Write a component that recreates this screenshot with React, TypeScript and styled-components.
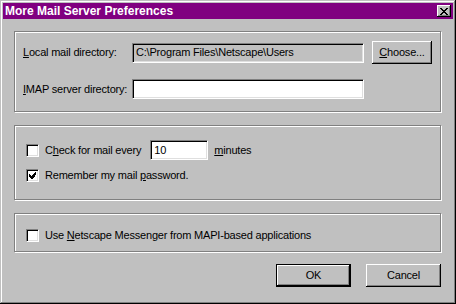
import React from "react";
import styled, { createGlobalStyle } from "styled-components";

const Global = createGlobalStyle`
  html, body { margin: 0; padding: 0; background: #c0c0c0; }
  body { font-family: "Liberation Sans", Arial, sans-serif; font-size: 11px; color: #000; }
  * { box-sizing: border-box; }
`;

const Window = styled.div`
  width: 456px;
  height: 304px;
  background: #c0c0c0;
  padding: 3px;
  display: flex;
  flex-direction: column;
  letter-spacing: -0.2px;
  box-shadow: inset -1px -1px 0 #000, inset 1px 1px 0 #c0c0c0,
    inset -2px -2px 0 #808080, inset 2px 2px 0 #fff;
`;

const TitleBar = styled.div`
  height: 16px;
  background: #800080;
  display: flex;
  align-items: center;
  justify-content: space-between;
  padding: 0 2px 0 2px;
`;

const Title = styled.span`
  color: #fff;
  font-weight: bold;
  font-size: 12px;
  letter-spacing: 0;
  line-height: 14px;
`;

const CloseBox = styled.div`
  width: 14px;
  height: 12px;
  background: #c0c0c0;
  display: flex;
  align-items: center;
  justify-content: center;
  box-shadow: inset -1px -1px 0 #000, inset 1px 1px 0 #fff,
    inset -2px -2px 0 #808080;
`;

const Body = styled.div`
  flex: 1;
  display: flex;
  flex-direction: column;
  padding: 12px 12px 0 11px;
`;

const Group = styled.div<{ $h: number; $pt: number; $gap: number; $mb: number }>`
  height: ${(p) => p.$h}px;
  border: 1px solid #808080;
  box-shadow: 1px 1px 0 #fff, inset 1px 1px 0 #fff;
  padding: ${(p) => p.$pt}px 8px 0 8px;
  margin-bottom: ${(p) => p.$mb}px;
  display: flex;
  flex-direction: column;
  gap: ${(p) => p.$gap}px;
`;

const DirGrid = styled.div`
  display: grid;
  grid-template-columns: 101px 232px 60px;
  column-gap: 8px;
  row-gap: 15px;
  align-items: center;
`;

const Label = styled.span`
  line-height: 13px;
  white-space: nowrap;
`;

const Field = styled.div<{ $disabled?: boolean; $w?: number }>`
  height: 20px;
  width: ${(p) => (p.$w ? `${p.$w}px` : "auto")};
  background: ${(p) => (p.$disabled ? "#c0c0c0" : "#fff")};
  border-top: 1px solid #808080;
  border-left: 1px solid #808080;
  border-bottom: 1px solid #fff;
  border-right: 1px solid #fff;
  box-shadow: inset 1px 1px 0 #000, inset -1px -1px 0 #dfdfdf;
  padding: 0 3px;
  display: flex;
  align-items: center;
  line-height: 13px;
  white-space: nowrap;
  overflow: hidden;
`;

const MinutesField = styled(Field)`
  margin-left: 9px;
  margin-right: 6px;
`;

const Button = styled.div<{ $default?: boolean; $w: number }>`
  width: ${(p) => p.$w}px;
  height: 23px;
  background: #c0c0c0;
  display: flex;
  align-items: center;
  justify-content: center;
  line-height: 13px;
  ${(p) =>
    p.$default
      ? `border: 1px solid #000;
         box-shadow: inset -1px -1px 0 #000, inset 1px 1px 0 #fff, inset -2px -2px 0 #808080;`
      : `box-shadow: inset -1px -1px 0 #000, inset 1px 1px 0 #fff, inset -2px -2px 0 #808080;`}
`;

const Row = styled.div<{ $h: number }>`
  display: flex;
  align-items: center;
  height: ${(p) => p.$h}px;
  padding-left: 3px;
`;

const Box = styled.div`
  width: 13px;
  height: 13px;
  flex: none;
  background: #fff;
  border-top: 1px solid #808080;
  border-left: 1px solid #808080;
  border-bottom: 1px solid #fff;
  border-right: 1px solid #fff;
  box-shadow: inset 1px 1px 0 #000, inset -1px -1px 0 #dfdfdf;
  margin-right: 6px;
  display: flex;
  align-items: center;
  justify-content: center;
`;

const Footer = styled.div`
  display: flex;
  justify-content: flex-end;
  gap: 15px;
`;

const Check = () => (
  <svg width="7" height="7" viewBox="0 0 7 7" shapeRendering="crispEdges">
    <path
      fill="#000"
      d="M6 0h1v3h-1zM5 1h1v4h-1zM4 2h1v4h-1zM3 3h1v4h-1zM2 4h1v3h-1zM1 3h1v3h-1zM0 2h1v3h-1z"
    />
  </svg>
);

const CheckBox = ({ checked }: { checked?: boolean }) => (
  <Box>{checked ? <Check /> : null}</Box>
);

const CloseX = () => (
  <svg width="8" height="7" viewBox="0 0 8 7" shapeRendering="crispEdges">
    <path
      fill="#000"
      d="M0 0h2v1h-2zM6 0h2v1h-2zM1 1h2v1h-2zM5 1h2v1h-2zM2 2h4v1h-4zM3 3h2v1h-2zM2 4h4v1h-4zM1 5h2v1h-2zM5 5h2v1h-2zM0 6h2v1h-2zM6 6h2v1h-2z"
    />
  </svg>
);

export default function App() {
  return (
    <>
      <Global />
      <Window>
        <TitleBar>
          <Title>More Mail Server Preferences</Title>
          <CloseBox>
            <CloseX />
          </CloseBox>
        </TitleBar>
        <Body>
          <Group $h={81} $pt={9} $gap={0} $mb={13}>
            <DirGrid>
              <Label>
                <u>L</u>ocal mail directory:
              </Label>
              <Field $disabled>C:\Program Files\Netscape\Users</Field>
              <Button $w={60}>
                <span>
                  <u>C</u>hoose...
                </span>
              </Button>
              <Label>
                <u>I</u>MAP server directory:
              </Label>
              <Field />
            </DirGrid>
          </Group>
          <Group $h={75} $pt={14} $gap={9} $mb={13}>
            <Row $h={20}>
              <CheckBox />
              <Label>
                C<u>h</u>eck for mail every
              </Label>
              <MinutesField $w={58}>10</MinutesField>
              <Label>
                <u>m</u>inutes
              </Label>
            </Row>
            <Row $h={13}>
              <CheckBox checked />
              <Label>
                Remember my mail <u>p</u>assword.
              </Label>
            </Row>
          </Group>
          <Group $h={39} $pt={15} $gap={0} $mb={12}>
            <Row $h={13}>
              <CheckBox />
              <Label>
                Use <u>N</u>etscape Messenger from MAPI-based applications
              </Label>
            </Row>
          </Group>
          <Footer>
            <Button $default $w={75}>
              OK
            </Button>
            <Button $w={75}>Cancel</Button>
          </Footer>
        </Body>
      </Window>
    </>
  );
}
